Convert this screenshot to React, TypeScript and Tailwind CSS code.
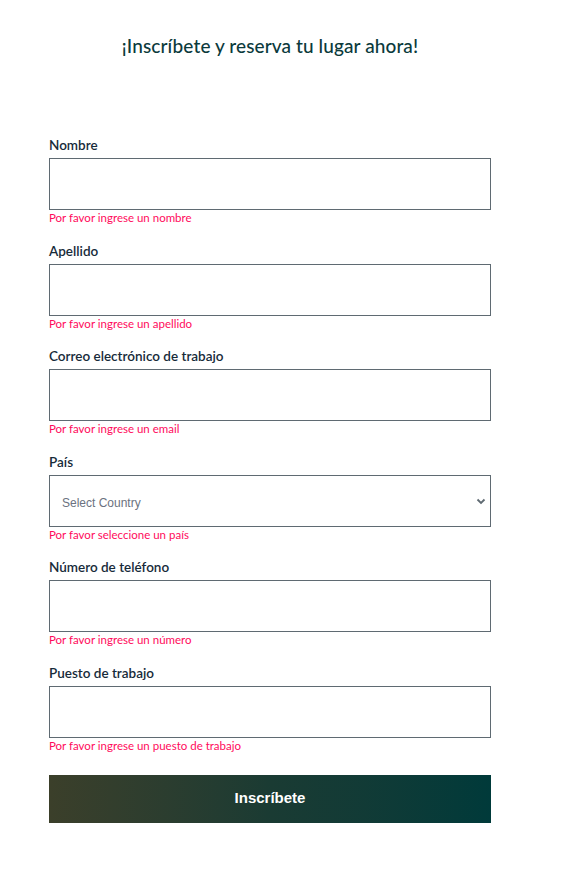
import React from "react";

const fields: { label: string; error: string; select?: boolean }[] = [
  { label: "Nombre", error: "Por favor ingrese un nombre" },
  { label: "Apellido", error: "Por favor ingrese un apellido" },
  { label: "Correo electrónico de trabajo", error: "Por favor ingrese un email" },
  { label: "País", error: "Por favor seleccione un país", select: true },
  { label: "Número de teléfono", error: "Por favor ingrese un número" },
  { label: "Puesto de trabajo", error: "Por favor ingrese un puesto de trabajo" },
];

export default function App() {
  return (
    <div className="min-h-[880px] bg-white pl-[49px] pt-[34px] font-['Lato',sans-serif]">
      <div className="w-[442px]">
        <h1 className="text-center text-[19px] leading-[24px] font-medium text-[#0b3a3c] tracking-[0.1px]">
          ¡Inscríbete y reserva tu lugar ahora!
        </h1>
        <form className="mt-[77px] flex flex-col">
          {fields.map((f) => (
            <div key={f.label} className="flex flex-col pb-[14.6px]">
              <label className="text-[13.5px] leading-[20px] font-semibold text-[#172b3a] mb-[3px]">
                {f.label}
              </label>
              {f.select ? (
                <div className="relative h-[52px] border border-[#5f6a72] bg-white flex items-center">
                  <span className="pl-[12px] pt-[4px] text-[12px] text-[#6b7280] font-['Liberation_Sans',Arial,sans-serif]">
                    Select Country
                  </span>
                  <svg
                    className="absolute right-[4px] top-1/2 -translate-y-1/2"
                    width="10"
                    height="10"
                    viewBox="0 0 10 10"
                  >
                    <path d="M1.5 3.5 L5 7 L8.5 3.5" fill="none" stroke="#5f6a72" strokeWidth="1.8" />
                  </svg>
                </div>
              ) : (
                <input className="h-[52px] border border-[#5f6a72] bg-white outline-none" />
              )}
              <span className="text-[11.5px] leading-[16px] text-[#ff0a5c]">{f.error}</span>
            </div>
          ))}
          <button
            type="button"
            className="mt-[6px] h-[48px] w-full bg-gradient-to-r from-[#3b3f2a] via-[#1a3b33] to-[#003a3a] text-white text-[15px] font-bold font-['Liberation_Sans',Arial,sans-serif]"
          >
            Inscríbete
          </button>
        </form>
      </div>
    </div>
  );
}
